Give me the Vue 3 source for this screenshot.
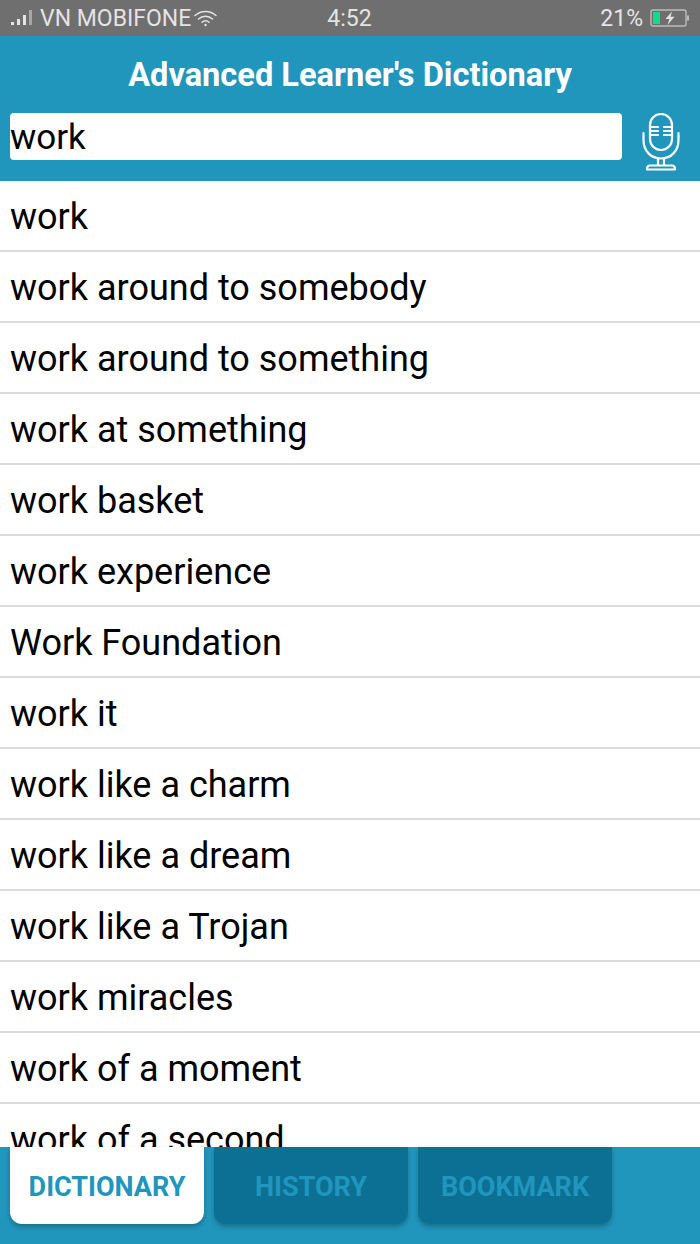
<template>
  <div class="screen">
    <div class="status">
      <div class="status-left">
        <svg class="signal" width="26" height="18" viewBox="0 0 26 18">
          <rect x="2" y="13" width="3" height="3" fill="#e4e4e4" />
          <rect x="8" y="10" width="3" height="6" fill="#e4e4e4" />
          <rect x="14" y="6" width="3" height="10" fill="#e4e4e4" />
          <rect x="20" y="1" width="3" height="15" fill="#a8a8a8" />
        </svg>
        <span class="carrier">VN MOBIFONE</span>
        <svg class="wifi" width="25" height="18" viewBox="0 0 25 18" fill="none" stroke="#e4e4e4" stroke-width="1.5" stroke-linecap="round">
          <path d="M1 6.5C7 1 16 1 22 6.5" />
          <path d="M4.5 10C8.5 6.3 14.5 6.3 18.5 10" />
          <path d="M8 13.2C10 11.4 13 11.4 15 13.2" />
          <circle cx="11.5" cy="16" r="1.2" fill="#e4e4e4" stroke="none" />
        </svg>
      </div>
      <span class="clock">4:52</span>
      <div class="status-right">
        <span class="percent">21%</span>
        <svg width="40" height="20" viewBox="0 0 40 20">
          <rect x="1" y="2" width="35" height="16" rx="2" fill="none" stroke="#bdbdbd" stroke-width="1.4" />
          <rect x="3" y="4" width="7" height="12" fill="#0fdc8c" />
          <rect x="37" y="7.5" width="2" height="5" fill="#bdbdbd" />
          <path d="M22 3.5L15.5 11H19.5L17.5 17L24.5 8.8H20.5Z" fill="#e4e4e4" />
        </svg>
      </div>
    </div>

    <header class="header">
      <h1 class="title">Advanced Learner's Dictionary</h1>
      <div class="search-row">
        <div class="search">work</div>
        <svg class="mic" width="38" height="58" viewBox="0 0 38 58" fill="none" stroke="#fff" stroke-width="2.2" stroke-linecap="round" stroke-linejoin="round">
          <rect x="8" y="1" width="22" height="36" rx="11" />
          <path d="M8 14H16M8 18H16M8 22H16M22 14H30M22 18H30M22 22H30" />
          <path d="M1.5 20V27C1.5 38 9 45.5 19 45.5C29 45.5 36.5 38 36.5 27V20" />
          <path d="M16 46V52M22 46V52" />
          <path d="M5 56.5C5 54 6 52.5 8 52.5H30C32 52.5 33 54 33 56.5Z" />
        </svg>
      </div>
    </header>

    <ul class="list">
      <li v-for="word in words" :key="word" class="row">{{ word }}</li>
    </ul>

    <nav class="tabs">
      <div v-for="tab in tabs" :key="tab" class="tab" :class="{ active: tab === current }">{{ tab }}</div>
    </nav>
  </div>
</template>

<script setup>
const words = [
  "work",
  "work around to somebody",
  "work around to something",
  "work at something",
  "work basket",
  "work experience",
  "Work Foundation",
  "work it",
  "work like a charm",
  "work like a dream",
  "work like a Trojan",
  "work miracles",
  "work of a moment",
  "work of a second",
];
const tabs = ["DICTIONARY", "HISTORY", "BOOKMARK"];
const current = "DICTIONARY";
</script>

<style>
body {
  margin: 0;
  background: #fff;
}
</style>

<style scoped>
* {
  box-sizing: border-box;
  font-family: Roboto, sans-serif;
}

.screen {
  width: 700px;
  height: 1244px;
  display: flex;
  flex-direction: column;
  overflow: hidden;
  background: #fff;
}

.status {
  height: 36px;
  flex: none;
  background: #6f6f6f;
  color: #e4e4e4;
  display: grid;
  grid-template-columns: 1fr auto 1fr;
  align-items: center;
  padding: 0 10px 0 9px;
  font-size: 23px;
}

.status-left {
  display: flex;
  align-items: center;
}

.carrier {
  margin-left: 5px;
  margin-right: 3px;
  white-space: nowrap;
}

.status-right {
  display: flex;
  align-items: center;
  justify-content: flex-end;
  gap: 7px;
}

.header {
  height: 145px;
  flex: none;
  background: #2196bd;
  padding: 0 10px;
}

.title {
  margin: 0;
  height: 77px;
  line-height: 78px;
  text-align: center;
  color: #fff;
  font-size: 32.6px;
  font-weight: 700;
}

.search-row {
  display: flex;
  align-items: flex-start;
  justify-content: space-between;
}

.search {
  width: 612px;
  height: 47px;
  background: #fff;
  border-radius: 4px;
  color: #000;
  font-size: 35px;
  line-height: 50px;
}

.mic {
  margin-right: 10px;
  flex: none;
}

.list {
  flex: 1;
  min-height: 0;
  margin: 0;
  padding: 0;
  list-style: none;
  overflow: hidden;
}

.row {
  height: 71px;
  padding-left: 10px;
  border-bottom: 2px solid #dcdcdc;
  color: #000;
  font-size: 36px;
  line-height: 72px;
  white-space: nowrap;
}

.tabs {
  height: 97px;
  flex: none;
  background: #2196bd;
  display: flex;
  align-items: flex-start;
  gap: 10px;
  padding: 0 10px;
}

.tab {
  width: 194px;
  height: 77px;
  border-radius: 0 0 12px 12px;
  background: #0c7095;
  color: #2196bd;
  font-size: 27px;
  font-weight: 700;
  line-height: 81px;
  text-align: center;
  box-shadow: 0 3px 5px rgba(0, 0, 0, 0.25);
}

.tab.active {
  background: #fff;
}
</style>
